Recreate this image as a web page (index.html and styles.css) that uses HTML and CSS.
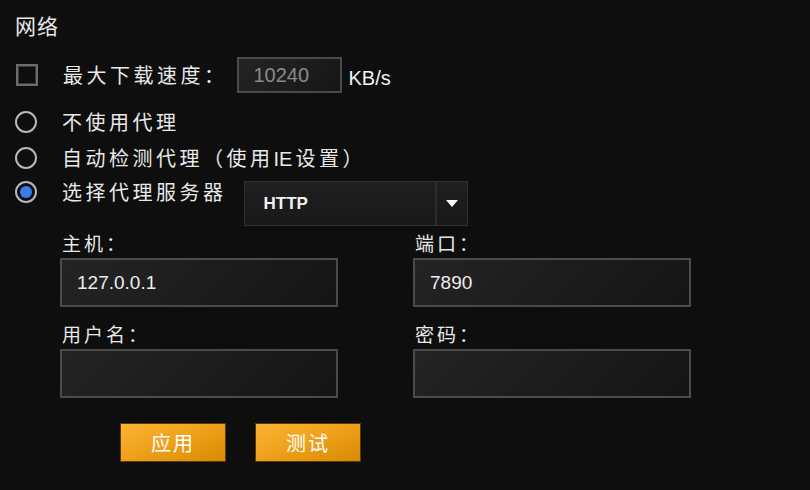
FILE: index.html
```html
<!DOCTYPE html>
<html lang="zh-CN">
<head>
<meta charset="utf-8">
<title>网络</title>
<link rel="stylesheet" href="styles.css">
</head>
<body>
<div class="panel">
  <div class="title">网络</div>

  <div class="row speed-row">
    <span class="checkbox"></span>
    <span class="label">最大下载速度：</span>
    <span class="speed-input">10240</span>
    <span class="unit">KB/s</span>
  </div>

  <div class="row radio-row">
    <span class="radio"></span>
    <span class="label">不使用代理</span>
  </div>
  <div class="row radio-row">
    <span class="radio"></span>
    <span class="label">自动检测代理（使用<span class="latin">IE</span>设置）</span>
  </div>
  <div class="row proxy-row">
    <div class="radio-line">
      <span class="radio checked"></span>
      <span class="label">选择代理服务器</span>
    </div>
    <div class="select">
      <span class="select-value">HTTP</span>
      <span class="select-btn"><span class="arrow"></span></span>
    </div>
  </div>

  <div class="fields">
    <div class="field">
      <div class="field-label">主机：</div>
      <div class="text-input">127.0.0.1</div>
    </div>
    <div class="field">
      <div class="field-label">端口：</div>
      <div class="text-input">7890</div>
    </div>
    <div class="field">
      <div class="field-label">用户名：</div>
      <div class="text-input"></div>
    </div>
    <div class="field">
      <div class="field-label">密码：</div>
      <div class="text-input"></div>
    </div>
  </div>

  <div class="buttons">
    <button class="btn">应用</button>
    <button class="btn">测试</button>
  </div>
</div>
</body>
</html>
```

FILE: styles.css
```css
html, body {
  margin: 0;
  padding: 0;
  background: #0e0e0e;
  width: 810px;
  height: 490px;
  overflow: hidden;
}

body {
  font-family: "Noto Sans CJK SC", "Liberation Sans", sans-serif;
  color: #e8e8e8;
}

.panel {
  padding-left: 15px;
}

.title {
  padding-top: 10px;
  height: 30px;
  line-height: 30px;
  font-size: 21px;
  letter-spacing: 1px;
}

.row {
  display: flex;
  align-items: center;
  height: 36px;
}

.label {
  font-size: 20px;
  letter-spacing: 3.5px;
  line-height: 36px;
}

.latin {
  font-family: "Liberation Sans", sans-serif;
  letter-spacing: 0;
  margin-right: 3px;
}

.speed-row {
  margin-top: 17px;
}

.checkbox {
  width: 18px;
  height: 18px;
  border: 2px solid #6c6c6c;
  box-shadow: inset 0 0 0 1px #3a3a3a;
  margin-left: 1px;
  margin-right: 25px;
}

.speed-input {
  box-sizing: border-box;
  width: 105px;
  height: 36px;
  margin-left: 9px;
  border: 2px solid #4a4a4a;
  background: linear-gradient(135deg, #242424, #161616);
  color: #8a8a8a;
  font-family: "Liberation Sans", sans-serif;
  font-size: 20px;
  line-height: 32px;
  padding-left: 15px;
}

.unit {
  margin-left: 7px;
  margin-top: 6px;
  font-family: "Liberation Sans", sans-serif;
  font-size: 20px;
  color: #f2f2f2;
}

.speed-row + .radio-row {
  margin-top: 11px;
}

.radio {
  position: relative;
  box-sizing: border-box;
  width: 22px;
  height: 22px;
  border: 2px solid #b8b8b8;
  border-radius: 50%;
  margin-right: 25px;
  flex: none;
}

.radio.checked::after {
  content: "";
  position: absolute;
  left: 3px;
  top: 3px;
  width: 12px;
  height: 12px;
  border-radius: 50%;
  background: #3b7cf2;
}

.proxy-row {
  align-items: flex-start;
  height: 50px;
}

.radio-line {
  display: flex;
  align-items: center;
  height: 36px;
  margin-top: -2px;
}

.select {
  display: flex;
  margin-left: 17px;
  margin-top: 5px;
  width: 224px;
  height: 45px;
  box-sizing: border-box;
  border: 1px solid #303030;
  background: linear-gradient(180deg, #1f1f1f, #191919);
}

.select-value {
  flex: 1;
  padding-left: 19px;
  font-family: "Liberation Sans", sans-serif;
  font-weight: bold;
  font-size: 17px;
  line-height: 43px;
  color: #f0f0f0;
  border-right: 2px solid #2c2c2c;
}

.select-btn {
  width: 30px;
  display: flex;
  align-items: center;
  justify-content: center;
}

.arrow {
  width: 0;
  height: 0;
  border-left: 6px solid transparent;
  border-right: 6px solid transparent;
  border-top: 7px solid #ffffff;
}

.fields {
  display: grid;
  grid-template-columns: 278px 278px;
  column-gap: 75px;
  row-gap: 12px;
  margin-left: 45px;
  margin-top: 2px;
}

.field-label {
  height: 30px;
  line-height: 30px;
  font-size: 19px;
  letter-spacing: 3px;
  padding-left: 2px;
}

.text-input {
  box-sizing: border-box;
  height: 49px;
  border: 2px solid #4b4b4b;
  background: linear-gradient(135deg, #242424, #151515);
  font-family: "Liberation Sans", sans-serif;
  font-size: 19px;
  line-height: 45px;
  color: #ededed;
  padding-left: 15px;
}

.buttons {
  display: flex;
  gap: 29px;
  margin-left: 105px;
  margin-top: 25px;
}

.btn {
  box-sizing: border-box;
  width: 106px;
  height: 39px;
  border: 1px solid #5a3c08;
  background: linear-gradient(160deg, #fbb331 0%, #f0a21c 45%, #d88a00 100%);
  color: #ffffff;
  font-family: "Noto Sans CJK SC", sans-serif;
  font-size: 20px;
  letter-spacing: 2px;
  padding: 0;
  line-height: 37px;
}
```
